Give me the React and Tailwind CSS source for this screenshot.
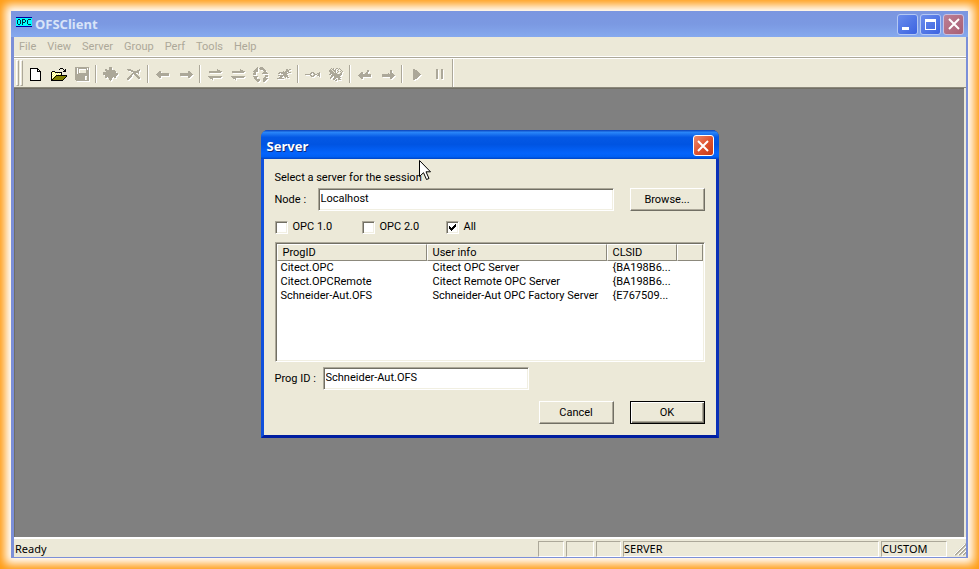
import { useState } from "react";

const INK = { k: "#000000", w: "#ffffff", y: "#ffff66", o: "#808000", g: "#aca899" };

function PixelIcon({ rows, embossed }) {
  const width = Math.max(...rows.map((r) => r.length));
  return (
    <svg
      width={width}
      height={rows.length}
      viewBox={`0 0 ${width} ${rows.length}`}
      shapeRendering="crispEdges"
      aria-hidden="true"
      className={embossed ? "shrink-0 drop-shadow-[1px_1px_0_#ffffff]" : "shrink-0"}
    >
      {rows.flatMap((row, y) =>
        [...row].map((c, x) =>
          INK[c] ? <rect key={`${x}-${y}`} x={x} y={y} width="1" height="1" fill={INK[c]} /> : null
        )
      )}
    </svg>
  );
}

const ICONS = {
  newFile: [
    "kkkkkkkk...",
    "kwwwwwwkk..",
    "kwwwwwwkwk.",
    "kwwwwwwkkkk",
    "kwwwwwwwwwk",
    "kwwwwwwwwwk",
    "kwwwwwwwwwk",
    "kwwwwwwwwwk",
    "kwwwwwwwwwk",
    "kwwwwwwwwwk",
    "kwwwwwwwwwk",
    "kwwwwwwwwwk",
    "kkkkkkkkkkk",
  ],
  open: [
    ".........kkk....",
    "........k...k.k.",
    ".............kk.",
    ".kkk........kkk.",
    "kywykkkkkkk.....",
    "kwywywywywk.....",
    "kywywywywyk.....",
    "kwywykkkkkkkkkkk",
    "kywykooooooooook",
    "kwykooooooooook.",
    "kykooooooooook..",
    "kkooooooooook...",
    "kkkkkkkkkkkk....",
  ],
  save: [
    "gggggggggggggg",
    "gg.ggggggggg.g",
    "gg.g.......g.g",
    "gg.g.......ggg",
    "gg.g.......ggg",
    "gg.g.......ggg",
    "gg.ggggggggggg",
    "gggggggggggggg",
    "gggggggggggggg",
    "gggggggggg..gg",
    "gggggggggg..gg",
    "gggggggggg..gg",
    "gggggggggg..gg",
    ".ggggggggggggg",
  ],
  add: [
    "......ggg......",
    "......ggg......",
    "..gg..ggg......",
    "..gggggggggg...",
    "...gggggggggg..",
    "ggggggggggggg..",
    "ggggggggggggggg",
    "ggggggggggggggg",
    "..gggggggggggg.",
    "..ggggggggggg..",
    "..gg.ggggg.gg..",
    "......ggg......",
    "......ggg......",
    ".......g.......",
  ],
  cut: [
    "gggg........g.",
    ".ggggg....ggg.",
    "....gggggggg..",
    "......gggggg..",
    ".....gggg..g..",
    "....gg.ggg....",
    "...gg...ggg...",
    "..ggg....ggg..",
    ".ggg......ggg.",
    "ggg........gg.",
    "gg............",
  ],
  left: [
    "...gg.........",
    "..ggg.........",
    ".gggggggggggg.",
    "ggggggggggggg.",
    ".gggggggggggg.",
    "..ggg.........",
    "...gg.........",
  ],
  right: [
    ".........gg...",
    ".........ggg..",
    ".gggggggggggg.",
    ".ggggggggggggg",
    ".gggggggggggg.",
    ".........ggg..",
    ".........gg...",
  ],
  swap: [
    ".........g....",
    ".........ggg..",
    ".ggggggggggggg",
    ".gggggggggggg.",
    "..............",
    "..............",
    "..............",
    "gggggggggggggg",
    ".gggggggggggg.",
    "..ggg.........",
    "....g.........",
  ],
  refresh: [
    "....g..ggg.....",
    "...gg.ggggg....",
    "..ggg..ggggg...",
    ".gggg.....ggg..",
    "ggggg......gg..",
    ".gg.......gggg.",
    "ggg......gggggg",
    "ggg............",
    "............ggg",
    "ggggg.......ggg",
    ".ggg.......gg..",
    ".ggg......ggggg",
    "..ggggg...gggg.",
    "...gggg...ggg..",
    "....gg....gg...",
  ],
  write: [
    ".........gg.gg",
    ".........ggg..",
    "......g.gggg..",
    "..gggggggg.ggg",
    ".gg.ggggggg...",
    "......gggg....",
    ".gggggggggg...",
    "...ggg.gggg...",
    "..ggg...g.gg..",
    "ggggggg.......",
  ],
  probe: [
    "......ggg.....g",
    ".....gg.gg..ggg",
    "gggggg...ggg.gg",
    ".....gg.gg..ggg",
    "......ggg.....g",
  ],
  bug: [
    "..g.g..gg.g...",
    ".g.gg.g..g.g..",
    "ggg.ggg.g...g.",
    "gggg.gg..g.g.g",
    ".gggg.g.g...g.",
    ".ggggggg...gg.",
    "gg.gggggggggg.",
    "..gggggggggg..",
    "..gg.gggggg...",
    ".gg..ggggggg..",
    ".g..ggg..gg...",
    "....gg.g.ggg..",
    "......gg......",
  ],
  stepLeft: [
    ".........gg...",
    ".........gg...",
    "...gg...gg....",
    "..ggg..ggg....",
    ".gggggggggggg.",
    "ggggggggggggg.",
    ".gggggggggggg.",
    "..ggg.........",
    "...gg.........",
  ],
  stepRight: [
    ".........gg...",
    ".........gg...",
    ".........gg...",
    ".......g.ggg..",
    ".gggggggggggg.",
    ".ggggggggggggg",
    ".gggggggggggg.",
    ".........ggg..",
    ".........gg...",
  ],
  play: [
    "gg......",
    "gggg....",
    "ggggg...",
    "gggggg..",
    "ggggggg.",
    "gggggggg",
    "ggggggg.",
    "gggggg..",
    "ggggg...",
    "gggg....",
    "gg......",
  ],
  pause: [
    "gg...gg",
    "gg...gg",
    "gg...gg",
    "gg...gg",
    "gg...gg",
    "gg...gg",
    "gg...gg",
    "gg...gg",
    "gg...gg",
    "gg...gg",
  ],
};

const TOOL_GROUPS = [
  [["New", "newFile"], ["Open", "open"], ["Save", "save"]],
  [["Add item", "add"], ["Delete item", "cut"]],
  [["Read", "left"], ["Write", "right"]],
  [["Sync read", "swap"], ["Sync write", "swap"], ["Refresh", "refresh"], ["Edit", "write"]],
  [["Probe", "probe"], ["Debug", "bug"]],
  [["Step back", "stepLeft"], ["Step forward", "stepRight"]],
  [["Play", "play"], ["Pause", "pause"]],
];

const SERVERS = [
  ["Citect.OPC", "Citect OPC Server", "{BA198B6..."],
  ["Citect.OPCRemote", "Citect Remote OPC Server", "{BA198B6..."],
  ["Schneider-Aut.OFS", "Schneider-Aut OPC Factory Server", "{E767509..."],
];

const SUNKEN =
  "border border-t-[#aca899] border-l-[#aca899] border-r-white border-b-white bg-white shadow-[inset_1px_1px_0_#716f64,inset_-1px_-1px_0_#f1efe2]";
const BUTTON =
  "h-[23px] w-[75px] shrink-0 border bg-[#ece9d8] text-center shadow-[inset_-1px_-1px_0_#aca899]";
const RAISED = "border-t-white border-l-white border-r-[#716f64] border-b-[#716f64]";
const TITLE_FONT = "font-['Noto_Sans','Open_Sans',sans-serif] text-[13px] leading-4 font-bold";
const CAPTION_BUTTON = "flex size-[21px] items-center justify-center rounded-[3px] border";

function CloseGlyph() {
  return (
    <svg width="12" height="12" viewBox="0 0 12 12" stroke="white" strokeWidth="2" aria-hidden="true">
      <path d="M1 1 L11 11 M11 1 L1 11" />
    </svg>
  );
}

function TitleBar() {
  return (
    <header className="flex h-[26px] shrink-0 items-center bg-linear-to-b from-[#7b96e0] via-[#7b99e2] to-[#86a9ee] pr-1 pl-[5px]">
      <svg width="16" height="10" viewBox="0 0 16 10" className="mb-[5px]" aria-hidden="true">
        <rect width="16" height="10" fill="#0000a0" />
        <rect y="1" width="16" height="8" fill="#00ffff" />
        <g fill="none" stroke="#003040" shapeRendering="crispEdges">
          <path d="M2 2.5 H4 M2 7.5 H4 M1.5 3 V7 M4.5 3 V7" />
          <path d="M6.5 8 V2.5 H9 M9.5 3 V5 M9 5.5 H6.5" />
          <path d="M15 2.5 H12 M11.5 3 V7 M12 7.5 H15" />
        </g>
      </svg>
      <h1 className={`ml-[3px] flex-1 text-[#d8e4f8] ${TITLE_FONT}`}>OFSClient</h1>
      <div className="flex gap-[2px]">
        <button aria-label="Minimize" className={`${CAPTION_BUTTON} border-[#b4c8f4] bg-linear-to-br from-[#6a8cec] to-[#3c62e0]`}>
          <svg width="13" height="13" aria-hidden="true"><rect x="1" y="9" width="7" height="3" fill="white" /></svg>
        </button>
        <button aria-label="Maximize" className={`${CAPTION_BUTTON} border-[#b4c8f4] bg-linear-to-br from-[#6a8cec] to-[#3c62e0]`}>
          <svg width="11" height="11" aria-hidden="true" fill="white"><path fillRule="evenodd" d="M0 0H11V11H0Z M1 3V10H10V3Z" /></svg>
        </button>
        <button aria-label="Close" className={`${CAPTION_BUTTON} border-[#c8c0e0] bg-linear-to-br from-[#bd7f94] to-[#a85f74]`}>
          <CloseGlyph />
        </button>
      </div>
    </header>
  );
}

function Toolbar() {
  return (
    <div role="toolbar" className="flex h-[30px] shrink-0 border-t border-b border-t-white border-b-[#8c897c] pl-[2px]">
      <div className="mr-[1px] flex gap-[1px] py-[1px]">
        <span className="w-[3px] border border-t-white border-l-white border-r-[#aca899] border-b-[#aca899]" />
        <span className="w-[3px] border border-t-white border-l-white border-r-[#aca899] border-b-[#aca899]" />
      </div>
      {TOOL_GROUPS.map((group, i) => (
        <div key={i} className="flex items-center pt-[2px]">
          {i > 0 && <span className="mx-[2px] h-[18px] w-[2px] border-r border-l border-r-white border-l-[#aca899]" />}
          {group.map(([label, icon]) => (
            <button key={label} aria-label={label} className="flex h-[22px] w-[23px] items-center justify-center">
              <PixelIcon rows={ICONS[icon]} embossed={icon !== "newFile" && icon !== "open"} />
            </button>
          ))}
        </div>
      ))}
      <span className="ml-[1px] w-[2px] border-r border-l border-r-white border-l-[#aca899]" />
    </div>
  );
}

function CheckBox({ id, label, checked, onChange, className = "" }) {
  return (
    <div className={`flex items-center gap-[5px] ${className}`}>
      <span className="relative flex size-[13px]">
        <input id={id} type="checkbox" checked={checked} onChange={onChange} className={`size-[13px] appearance-none ${SUNKEN}`} />
        {checked && (
          <svg width="7" height="7" viewBox="0 0 7 7" className="pointer-events-none absolute top-[3px] left-[3px]" shapeRendering="crispEdges" aria-hidden="true">
            <path d="M0 2h1v1h1v1h1v-1h1v-1h1v-1h1v-1h1v3h-1v1h-1v1h-1v1h-1v1h-1v-1h-1v-1h-1z" />
          </svg>
        )}
      </span>
      <label htmlFor={id}>{label}</label>
    </div>
  );
}

function ServerDialog() {
  const [node, setNode] = useState("Localhost");
  const [progId, setProgId] = useState("Schneider-Aut.OFS");
  const [filters, setFilters] = useState({ v1: false, v2: false, all: true });
  const toggle = (key) => () => setFilters({ ...filters, [key]: !filters[key] });
  const th =
    "h-[17px] border border-t-white border-l-white border-r-[#8c897c] border-b-[#8c897c] bg-[#ece9d8] p-0 pl-[5px] text-left font-normal";

  return (
    <section
      role="dialog"
      aria-label="Server"
      className="relative w-[458px] rounded-t-[7px] border-r-[3px] border-b-[3px] border-l-[3px] border-t-0 border-r-[#0a30b8] border-b-[#001ea0] border-l-[#0f50dc] bg-[#0855dd]"
    >
      <header className="-mx-[3px] flex h-[29px] items-center justify-between rounded-t-[7px] bg-[linear-gradient(#0a40b8_0%,#2a86f8_8%,#0458e4_25%,#0054e2_50%,#0464fc_80%,#0060f4_92%,#0044c4_100%)] pt-[2px] pr-[5px] pl-[6px]">
        <h2 className={`text-white [text-shadow:1px_1px_#0a2a80] ${TITLE_FONT}`}>Server</h2>
        <button aria-label="Close dialog" className={`${CAPTION_BUTTON} border-white bg-linear-to-br from-[#ec8a6c] via-[#e05430] to-[#c83810]`}>
          <CloseGlyph />
        </button>
      </header>
      <div className="bg-[#ece9d8] px-[11px] pt-[11px] pb-[11px]">
        <p className="leading-4">Select a server for the session</p>
        <div className="mt-[2px] flex items-center">
          <label htmlFor="node" className="w-[43px]">Node :</label>
          <input id="node" value={node} onChange={(e) => setNode(e.target.value)} className={`h-[23px] min-w-0 flex-1 px-[2px] pb-[3px] ${SUNKEN}`} />
          <button className={`ml-4 ${BUTTON} ${RAISED}`}>Browse...</button>
        </div>
        <div className="mt-2 flex h-4 items-center">
          <CheckBox id="opc1" label="OPC 1.0" checked={filters.v1} onChange={toggle("v1")} className="w-[87px]" />
          <CheckBox id="opc2" label="OPC 2.0" checked={filters.v2} onChange={toggle("v2")} className="w-[84px]" />
          <CheckBox id="all" label="All" checked={filters.all} onChange={toggle("all")} />
        </div>
        <div className={`mt-[7px] h-[120px] p-[1px] ${SUNKEN}`}>
          <table className="w-full table-fixed border-separate border-spacing-0">
            <colgroup>
              <col className="w-[150px]" />
              <col className="w-[180px]" />
              <col className="w-[70px]" />
              <col />
            </colgroup>
            <thead>
              <tr>
                <th className={th}>ProgID</th>
                <th className={th}>User info</th>
                <th className={th}>CLSID</th>
                <td className={th} />
              </tr>
            </thead>
            <tbody>
              {SERVERS.map(([id, info, clsid]) => (
                <tr key={id} className="h-[14px] leading-[14px] whitespace-nowrap">
                  <td className="p-0 pl-1">{id}</td>
                  <td className="p-0 pl-[6px]">{info}</td>
                  <td className="p-0 pl-[6px]">{clsid}</td>
                  <td className="p-0" />
                </tr>
              ))}
            </tbody>
          </table>
        </div>
        <div className="mt-[5px] flex items-center">
          <label htmlFor="progid" className="w-[48px] whitespace-nowrap">Prog ID :</label>
          <input id="progid" value={progId} onChange={(e) => setProgId(e.target.value)} className={`h-[23px] w-[206px] px-[2px] pb-[3px] ${SUNKEN}`} />
        </div>
        <div className="mt-[11px] flex justify-end gap-4">
          <button className={`${BUTTON} ${RAISED}`}>Cancel</button>
          <button className="h-[23px] w-[75px] border border-black bg-[#ece9d8] shadow-[inset_1px_1px_0_#ffffff,inset_-1px_-1px_0_#716f64,inset_-2px_-2px_0_#aca899]">OK</button>
        </div>
      </div>
      <svg width="12" height="21" viewBox="0 0 12 21" className="pointer-events-none absolute top-[30px] left-[155px]" aria-hidden="true">
        <path d="M0.5 0.5 V16.5 L4.5 12.7 L7.5 19.5 L10 18.5 L7 11.8 H11.5 Z" fill="white" stroke="black" />
      </svg>
    </section>
  );
}

function StatusBar() {
  const pane = "h-4 border border-t-[#aca899] border-l-[#aca899] border-r-white border-b-white whitespace-nowrap leading-[14px]";
  return (
    <footer className="flex h-[20px] shrink-0 items-center gap-[2px] border-t-2 border-white bg-[#ece9d8] pt-[2px] font-['Noto_Sans','Open_Sans',sans-serif] text-[11px] leading-4">
      <span className="flex-1 pl-[1px]">Ready</span>
      <span className={`w-[26px] ${pane}`} />
      <span className={`w-[28px] ${pane}`} />
      <span className={`w-[25px] ${pane}`} />
      <span className={`w-[256px] ${pane}`}>SERVER</span>
      <span className={`w-[66px] ${pane}`}>CUSTOM</span>
      <svg width="17" height="14" viewBox="0 0 17 14" aria-hidden="true">
        <path d="M6 13 L17 2 M10 13 L17 6 M14 13 L17 10" stroke="#aca899" strokeWidth="2" />
        <path d="M5 13 L16 2 M9 13 L17 5 M13 13 L17 9" stroke="white" strokeWidth="1" />
      </svg>
    </footer>
  );
}

export default function App() {
  return (
    <div className="flex h-screen flex-col bg-white p-[11px] font-[Roboto,'Liberation_Sans',sans-serif] text-[11px] leading-[14px] text-black shadow-[inset_0_0_10px_5px_#ff9c14]">
      <div className="flex min-h-0 flex-1 flex-col bg-[#7b8fd8]">
        <TitleBar />
        <div className="mr-[2px] mb-[1px] ml-[3px] flex min-h-0 flex-1 flex-col bg-[#ece9d8]">
          <nav className="flex h-[21px] shrink-0 items-center gap-[11px] border-b border-[#aca899] pl-[5px] text-[#aca899] shadow-[inset_0_-1px_0_#ffffff]">
            {["File", "View", "Server", "Group", "Perf", "Tools", "Help"].map((m) => (
              <button key={m}>{m}</button>
            ))}
          </nav>
          <Toolbar />
          <main className="mr-[2px] flex min-h-0 flex-1 items-start justify-center border-t border-l border-[#716f64] bg-[#808080] pt-[41px]">
            <ServerDialog />
          </main>
          <StatusBar />
        </div>
      </div>
    </div>
  );
}
